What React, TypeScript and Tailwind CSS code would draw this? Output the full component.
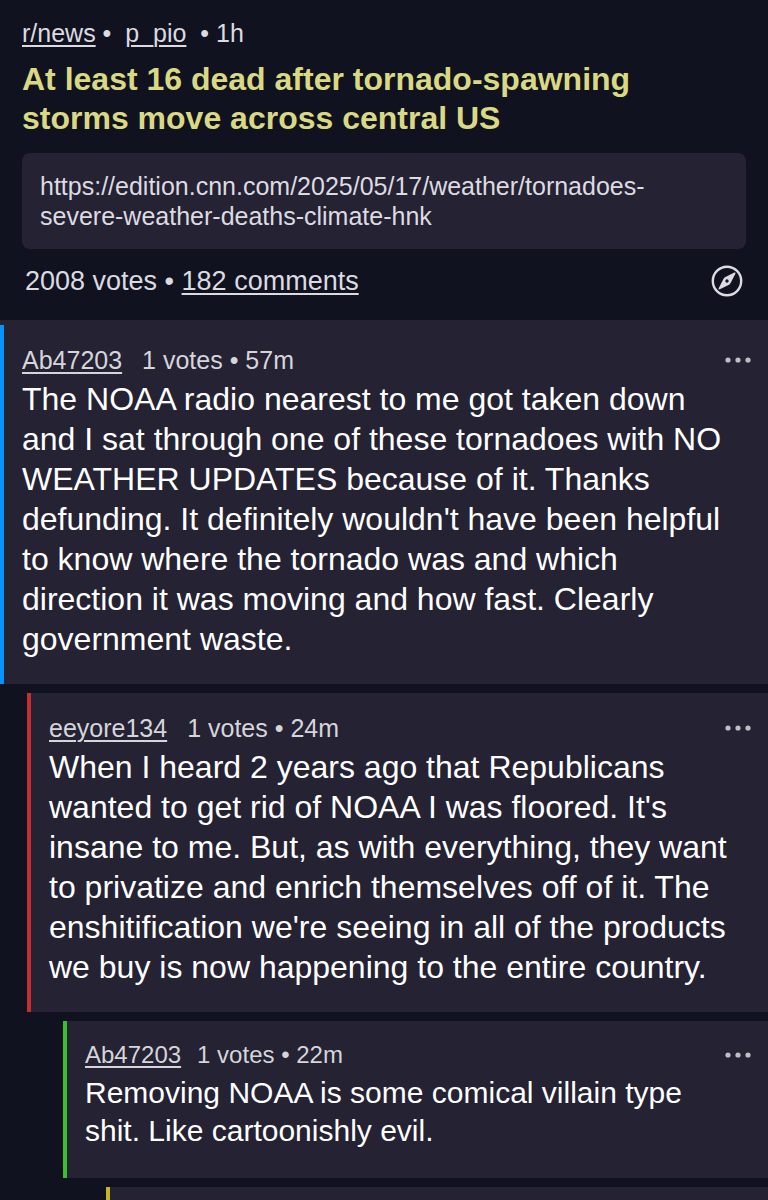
import React from "react";
import clsx from "clsx";

type Comment = {
  id: number;
  author: string;
  votes: number;
  age: string;
  body: string;
};

const comments: Comment[] = [
  {
    id: 1,
    author: "Ab47203",
    votes: 1,
    age: "57m",
    body: "The NOAA radio nearest to me got taken down and I sat through one of these tornadoes with NO WEATHER UPDATES because of it. Thanks defunding. It definitely wouldn't have been helpful to know where the tornado was and which direction it was moving and how fast. Clearly government waste.",
  },
  {
    id: 2,
    author: "eeyore134",
    votes: 1,
    age: "24m",
    body: "When I heard 2 years ago that Republicans wanted to get rid of NOAA I was floored. It's insane to me. But, as with everything, they want to privatize and enrich themselves off of it. The enshitification we're seeing in all of the products we buy is now happening to the entire country.",
  },
  {
    id: 3,
    author: "Ab47203",
    votes: 1,
    age: "22m",
    body: "Removing NOAA is some comical villain type shit. Like cartoonishly evil.",
  },
];

// one entry per depth
const levels = [
  "ml-0 border-[#0494fc]",
  "ml-[27px] border-[#c43030]",
  "ml-[63px] border-[#38c030]",
  "ml-[106px] border-[#c8b428]",
];

function CompassIcon() {
  return (
    <svg viewBox="0 0 32 32" className="size-8" fill="none" aria-hidden="true">
      <circle cx="16" cy="16" r="14.2" stroke="currentColor" strokeWidth="2.4" />
      <path
        fill="currentColor"
        fillRule="evenodd"
        d="M23.4 7.6L14.4 12Q13.1 12.7 12.4 14L7.7 23.2C7.3 24.100 7.900 24.700 8.800 24.300L17.600 20Q18.900 19.300 19.600 18L24.400 8.800C24.800 7.900 24.200 7.200 23.400 7.600zM16 14.300a1.700 1.700 0 1 0 0 3.400 1.700 1.700 0 0 0 0-3.400z"
      />
    </svg>
  );
}

function DotsIcon() {
  return (
    <svg viewBox="0 0 26 6" className="h-1.5 w-[26px]" fill="currentColor" aria-hidden="true">
      <circle cx="3" cy="3" r="2.6" />
      <circle cx="13" cy="3" r="2.6" />
      <circle cx="23" cy="3" r="2.6" />
    </svg>
  );
}

function CommentCard({ comment, depth }: { comment: Comment; depth: number }) {
  const small = depth > 1;

  return (
    <article
      className={clsx(
        "border-l-4 bg-[#242233] pl-[18px] pr-[17px]",
        small ? "pt-[19px] pb-7" : "pt-5 pb-[25px]",
        levels[depth]
      )}>
      <div
        className={clsx(
          "flex items-center leading-[30px] text-[#d6d5da]",
          small ? "gap-4 text-[24px]" : "gap-5 text-[25px]"
        )}>
        <a href="#" className="underline decoration-2 underline-offset-3">
          {comment.author}
        </a>
        <span>
          {comment.votes} votes • {comment.age}
        </span>
        <button type="button" aria-label="More" className="ml-auto text-[#bfbdc6]">
          <DotsIcon />
        </button>
      </div>
      <p
        className={clsx(
          "mt-1 pr-3 text-white",
          small ? "text-[30px] leading-[38px]" : "text-[32px] leading-[40px]"
        )}>
        {comment.body}
      </p>
    </article>
  );
}

export default function App() {
  return (
    <div className="flex min-h-screen flex-col bg-[#111220] font-['Liberation_Sans',Arial,sans-serif]">
      <header className="px-[22px] pt-[18px] pb-[23px] text-[#dcdbe0]">
        <div className="flex whitespace-pre text-[25px] leading-[30px]">
          <a href="#" className="underline decoration-2 underline-offset-3">
            r/news
          </a>
          <span>{" •  "}</span>
          <a href="#" className="underline decoration-2 underline-offset-3">
            p_pio
          </a>
          <span>{"  • 1h"}</span>
        </div>
        <h1 className="mt-3 pr-3 text-[32px] leading-[39px] font-bold text-[#d9d984]">
          At least 16 dead after tornado-spawning storms move across central US
        </h1>
        <a
          href="https://edition.cnn.com/2025/05/17/weather/tornadoes-severe-weather-deaths-climate-hnk"
          className="mt-[15px] block rounded-lg bg-[#242233] py-[18px] pr-6 pl-[18px] text-[25px] leading-[30px]">
          https://edition.cnn.com/2025/05/17/weather/tornadoes-severe-weather-deaths-climate-hnk
        </a>
        <div className="mt-4 flex items-center justify-between px-[3px] text-[27px] leading-[32px]">
          <span>
            2008 votes •{" "}
            <a href="#" className="underline decoration-2 underline-offset-3">
              182 comments
            </a>
          </span>
          <button type="button" aria-label="Open in browser">
            <CompassIcon />
          </button>
        </div>
      </header>

      <main className="flex flex-1 flex-col">
        <div className="h-[5px] bg-[#242233]" />
        <div className="flex flex-1 flex-col gap-[9px]">
          {comments.map((comment, i) => (
            <CommentCard key={comment.id} comment={comment} depth={i} />
          ))}
          <div className={clsx("flex-1 border-l-4 bg-[#242233]", levels[3])} />
        </div>
      </main>
    </div>
  );
}
